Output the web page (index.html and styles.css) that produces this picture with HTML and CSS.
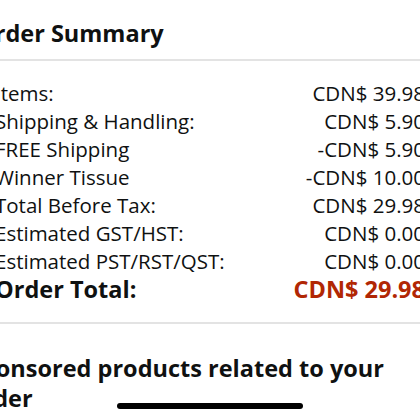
FILE: index.html
```html
<!DOCTYPE html>
<html>
<head>
<meta charset="utf-8">
<link rel="stylesheet" href="styles.css">
</head>
<body>
<div class="page">
  <h1 class="title">Order Summary</h1>
  <div class="divider"></div>
  <div class="rows">
    <div class="row"><span>Items:</span><span>CDN$ 39.98</span></div>
    <div class="row"><span>Shipping &amp; Handling:</span><span>CDN$ 5.90</span></div>
    <div class="row"><span>FREE Shipping</span><span>-CDN$ 5.90</span></div>
    <div class="row"><span>Winner Tissue</span><span>-CDN$ 10.00</span></div>
    <div class="row"><span>Total Before Tax:</span><span>CDN$ 29.98</span></div>
    <div class="row"><span>Estimated GST/HST:</span><span>CDN$ 0.00</span></div>
    <div class="row"><span>Estimated PST/RST/QST:</span><span>CDN$ 0.00</span></div>
    <div class="row total"><span>Order Total:</span><span class="price">CDN$ 29.98</span></div>
  </div>
  <div class="divider"></div>
  <h2 class="sponsored">Sponsored products related to your order</h2>
</div>
<div class="home-indicator"></div>
</body>
</html>
```
FILE: styles.css
```css
html, body {
  margin: 0;
  padding: 0;
  background: #ffffff;
  overflow: hidden;
  width: 420px;
  height: 420px;
}
body {
  font-family: "Open Sans", "Noto Sans", sans-serif;
  color: #0f1111;
  position: relative;
}
.page {
  margin-left: -5px;
  width: 430px;
}
.title {
  margin: 0 0 0 -19px;
  padding-top: 17px;
  height: 42px;
  line-height: 32px;
  font-size: 23.5px;
  font-weight: 700;
}
.divider {
  height: 2px;
  background: #e3e3e3;
  margin-left: -20px;
}
.rows {
  padding: 18px 0 19px;
}
.row {
  display: flex;
  justify-content: space-between;
  height: 28px;
  line-height: 28px;
  font-size: 20.5px;
}
.row.total {
  font-weight: 700;
  font-size: 23.5px;
}
.price {
  color: #b12704;
}
.sponsored {
  margin: 29px 0 0 -27px;
  width: 440px;
  font-size: 23.5px;
  line-height: 30px;
  font-weight: 700;
}
.home-indicator {
  position: absolute;
  left: 117px;
  top: 403px;
  width: 186px;
  height: 6px;
  border-radius: 3px;
  background: #000;
}
```
